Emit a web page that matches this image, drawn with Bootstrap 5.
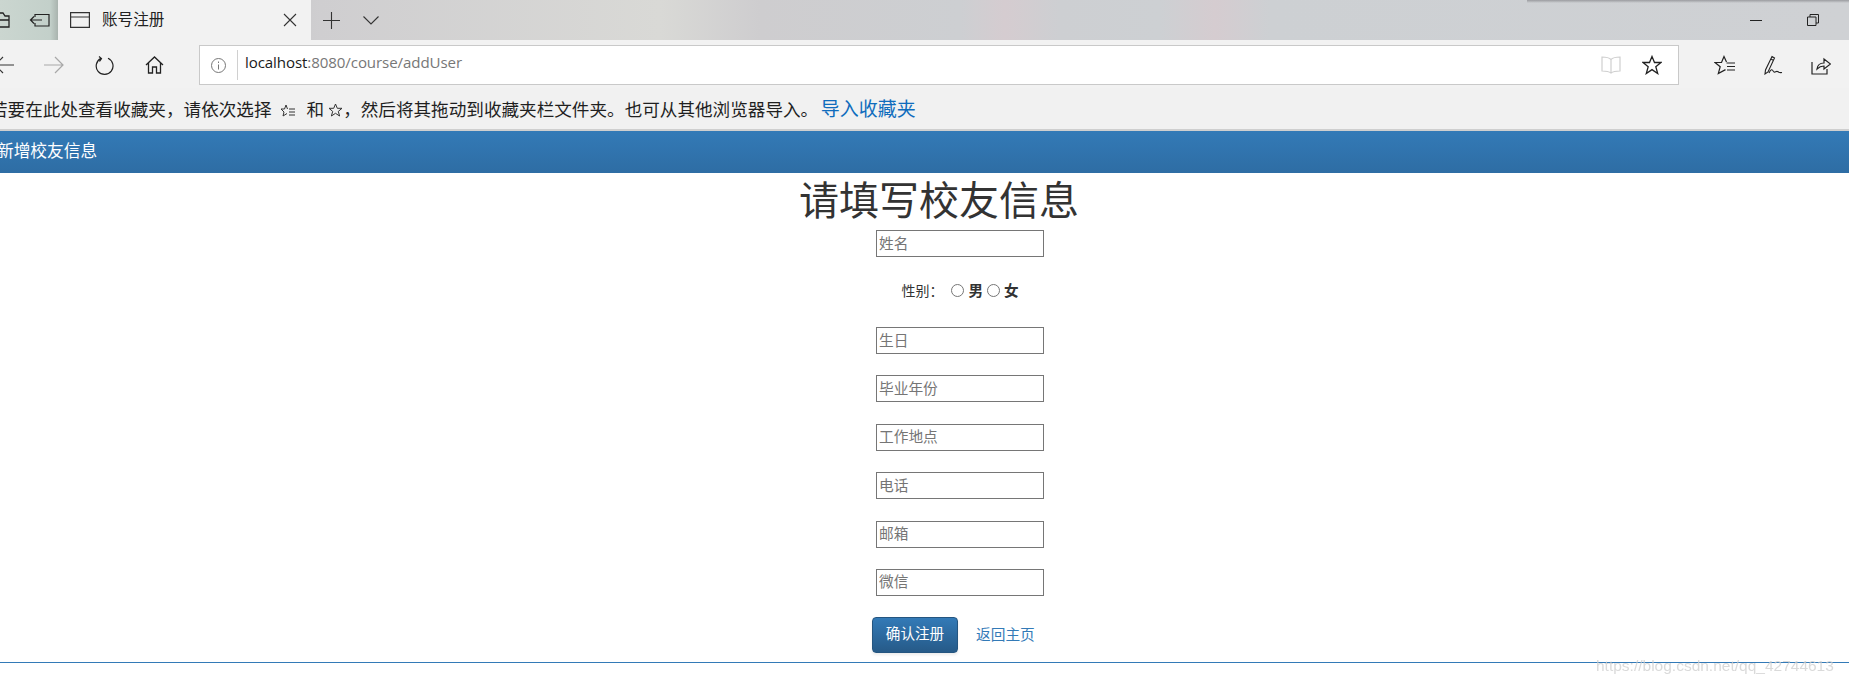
<!DOCTYPE html>
<html lang="zh-CN">
<head>
  <meta charset="UTF-8">
  <title>账号注册</title>
  <link href="https://cdn.jsdelivr.net/npm/bootstrap@5.3.2/dist/css/bootstrap.min.css" rel="stylesheet">
  <style>
    html, body { height: 684px; overflow: hidden; }
    body {
      background: #fff;
      color: #333;
      font-family: "Liberation Sans", "Noto Sans CJK SC", sans-serif;
      position: relative;
    }
    svg { display: block; flex: none; }

    /* browser frame */
    .tab-strip {
      height: 40px;
      position: relative;
      background: linear-gradient(90deg, #cbd6d0 0, #c3d0ca 50px, #a9b3ae 58px, #cfced0 320px, #d9d9d6 660px, #cecdcf 760px, #cdcfd2 960px, #d5ccd0 1005px, #cdcfd2 1060px, #cdd0d3 1160px, #d5ccd0 1215px, #cdd0d3 1270px, #cfd1d4 1849px);
    }
    .tab-shadow {
      position: absolute;
      left: 1527px;
      right: 0;
      top: 0;
      height: 3px;
      background: linear-gradient(#9b9ca0, rgba(155, 156, 160, 0));
    }
    .side-icons { width: 58px; padding-left: 0; }
    .tab-open {
      width: 253px;
      height: 40px;
      background: #f2f2f2;
      padding: 0 14px 0 12px;
      font-size: 15.6px;
      color: #222;
    }
    .strip-btn { width: 40px; }
    .win-btn { width: 57px; }
    .tool-row {
      height: 48px;
      background: #f2f2f2;
      padding-top: 2px;
    }
    .nav-icons { width: 199px; }
    .address-box {
      width: 1480px;
      height: 40px;
      background: #fff;
      border: 1px solid #c9c9c9;
    }
    .info-slot { width: 38px; height: 30px; border-right: 1px solid #d0d0d0; }
    .url-text {
      font-family: "Open Sans", "Noto Sans", sans-serif;
      font-size: 15.1px;
      letter-spacing: -0.1px;
      color: #777;
      padding-left: 7px;
      margin-top: -5px;
    }
    .url-host { color: #1a1a1a; }
    .addr-right { padding-right: 16px; gap: 21px; }
    .tool-right { flex: 1; justify-content: space-around; padding: 0 4px 0 21px; }
    .fav-row {
      height: 43px;
      background: #f1f1f1;
      border-bottom: 2px solid #cfcfcf;
      font-size: 17.6px;
      color: #1f1f1f;
      white-space: nowrap;
      padding-top: 3px;
    }
    .fav-line { margin-left: -10px; }
    .fav-link { color: #0f6cbd; font-size: 19px; text-decoration: none; margin-left: 2.5px; }

    /* page */
    .top-bar {
      height: 42px;
      background: linear-gradient(#337ab7, #2e6da4);
      padding: 0;
    }
    .top-bar .navbar-brand {
      color: #fff;
      font-size: 16.7px;
      padding: 0;
      margin-left: -3px;
    }
    .page-title {
      font-size: 40px;
      font-weight: 400;
      line-height: 48px;
      color: #333;
      margin: 4px 0 0 29px;
      white-space: nowrap;
    }
    .reg-form { padding-left: 71px; }
    .field-row { height: 48.4px; }
    .first-row { margin-top: 5px; height: 41px; }
    .sex-row { height: 56px; font-size: 14px; color: #333; padding-top: 10px; }
    .sex-row label { font-weight: 700; font-size: 14.6px; }
    .sex-row input { margin: 3px 4px 0 0; width: 13px; height: 13px; }
    .plain-input {
      width: 168px;
      height: 27px;
      border: 1px solid #767676;
      border-radius: 0;
      padding: 1px 2px;
      font-size: 14.7px;
      outline: 0;
      display: block;
    }
    .plain-input::placeholder { color: #757575; }
    .btn-row { width: 168px; margin-left: -8px; white-space: nowrap; }
    .btn-save {
      width: 86px;
      height: 36px;
      padding: 0;
      font-size: 14.6px;
      color: #fff;
      background: linear-gradient(#337ab7, #265a88);
      border: 1px solid #245580;
      border-radius: 4px;
      box-shadow: 0 2px 3px rgba(0, 0, 0, .08);
    }
    .back-link { color: #337ab7; font-size: 14.7px; text-decoration: none; margin-left: 18px; }
    .end-rule { margin: 9px 0 0; border: 0; border-top: 1px solid #337ab7; opacity: 1; }
    .watermark {
      position: absolute;
      left: 1596px;
      top: 654px;
      font-size: 15.5px;
      color: rgba(205, 205, 205, .75);
      filter: blur(.5px);
      white-space: nowrap;
    }
  </style>
</head>
<body>
  <div class="tab-strip d-flex align-items-center">
    <div class="tab-shadow"></div>
    <div class="side-icons d-flex align-items-center">
      <svg width="10" height="16" viewBox="0 0 10 16" fill="none" stroke="#222" stroke-width="1.3"><path d="M-4 1H3L5 4H9V15H-4M-4 8H9"/></svg>
      <svg class="ms-auto me-2" width="21" height="14" viewBox="0 0 21 14" fill="none" stroke="#222" stroke-width="1.2"><path d="M6 4V1.500H20V13H6V10M13 7H1.500M5 3.500L1.500 7L5 10.500"/></svg>
    </div>
    <div class="tab-open d-flex align-items-center">
      <svg width="20" height="16" viewBox="0 0 20 16" fill="none" stroke="#333" stroke-width="1.2"><path d="M.6.6H19.4V15.4H.6ZM.6 5H19.4"/></svg>
      <span class="ms-2 ps-1">账号注册</span>
      <svg class="ms-auto" width="14" height="14" viewBox="0 0 14 14" fill="none" stroke="#333" stroke-width="1.1"><path d="M1 1L13 13M13 1L1 13"/></svg>
    </div>
    <div class="strip-btn d-flex justify-content-center">
      <svg width="17" height="17" viewBox="0 0 17 17" fill="none" stroke="#333" stroke-width="1.1"><path d="M0 8.500H17M8.500 0V17"/></svg>
    </div>
    <div class="strip-btn d-flex justify-content-center">
      <svg width="16" height="9" viewBox="0 0 16 9" fill="none" stroke="#333" stroke-width="1.1"><path d="M.5.5L8 8L15.500.5"/></svg>
    </div>
    <div class="ms-auto d-flex align-items-center">
      <div class="win-btn d-flex justify-content-center"><svg width="12" height="1" viewBox="0 0 12 1"><path d="M0 .5H12" stroke="#222"/></svg></div>
      <div class="win-btn d-flex justify-content-center me-2"><svg width="12" height="12" viewBox="0 0 12 12" fill="none" stroke="#222"><path d="M.5 3H9V11.500H.5ZM3 3V.5H11.500V9H9"/></svg></div>
    </div>
  </div>

  <div class="tool-row d-flex align-items-center">
    <div class="nav-icons d-flex align-items-center">
      <svg style="margin-left:-6px;margin-right:30px" width="20" height="18" viewBox="0 0 20 18" fill="none" stroke="#333" stroke-width="1.2"><path d="M1 9H20M9 1L1 9L9 17"/></svg>
      <svg style="margin-right:31px" width="20" height="18" viewBox="0 0 20 18" fill="none" stroke="#a8a8a8" stroke-width="1.2"><path d="M0 9H19M11 1L19 9L11 17"/></svg>
      <svg style="margin-right:31px" width="19" height="19" viewBox="0 0 19 19" fill="none" stroke="#222" stroke-width="1.2"><path d="M6 2.400A8.400 8.400 0 1 0 13 2.300M4 .5L6.500 2.500L4.500 5.500"/></svg>
      <svg width="19" height="18" viewBox="0 0 19 18" fill="none" stroke="#222" stroke-width="1.3"><path d="M1 9L9.500 1L18 9M3.500 7V17H7.500V11H11.500V17H15.500V7"/></svg>
    </div>
    <div class="address-box d-flex align-items-center">
      <div class="info-slot d-flex align-items-center justify-content-center">
        <svg width="15" height="15" viewBox="0 0 15 15" fill="none" stroke="#777"><circle cx="7.500" cy="7.500" r="7"/><path d="M7.500 6.500V11.500M7.500 3.500V5"/></svg>
      </div>
      <div class="url-text"><span class="url-host">localhost</span>:8080/course/addUser</div>
      <div class="addr-right ms-auto d-flex align-items-center">
        <svg width="20" height="18" viewBox="0 0 20 18" fill="none" stroke="#cfcfcf" stroke-width="1.2"><path d="M10 3.500C8 1.500 4 1 1 1V15C4 15 8 15.500 10 17C12 15.500 16 15 19 15V1C16 1 12 1.500 10 3.500V17"/></svg>
        <svg width="20" height="20" viewBox="0 0 20 20" fill="none" stroke="#222" stroke-width="1.3"><path d="M10 1.500L12.500 7.500H19L13.800 11.700L15.700 18.500L10 14.600L4.300 18.500L6.200 11.700L1 7.500H7.500Z"/></svg>
      </div>
    </div>
    <div class="tool-right d-flex align-items-center">
      <svg width="21" height="20" viewBox="0 0 21 20" fill="none" stroke="#222" stroke-width="1.2"><path d="M21 8H12.500M21 11.500H13M21 15H13M11.500 14.600L4.300 18.500L6.200 11.700L1 7.500H7.500L10 1.500L12.500 7"/></svg>
      <svg width="20" height="20" viewBox="0 0 20 20" fill="none" stroke="#222" stroke-width="1.1"><path d="M9 1.500L11.500 3L5 17L2 19L2.500 15ZM8 4L10.500 5.500M6 18C8 14 9 14 10.500 16.500C12 18.500 13 15.500 14.500 16.500C16 17.500 17 18 19 17.500"/></svg>
      <svg width="20" height="19" viewBox="0 0 20 19" fill="none" stroke="#222" stroke-width="1.2"><path d="M1 6V18H16V13M6 13C6.500 9 9 7 13 7V3L19.500 8L13 13V10C10 10 8 11 6 13Z"/></svg>
    </div>
  </div>

  <div class="fav-row d-flex align-items-center">
    <div class="fav-line d-flex align-items-center">
      <span>若要在此处查看收藏夹，请依次选择</span>
      <svg class="mx-2" width="15" height="13" viewBox="0 0 15 13" fill="none" stroke="#333"><path d="M15 5H9M15 8H9M15 11H9M7 9.500L3 12L4 8L1 5H4.500L6 1L7.500 5"/></svg>
      <span class="ms-1">和</span>
      <svg class="ms-1" width="15" height="14" viewBox="0 0 15 14" fill="none" stroke="#333"><path d="M7.500 1L9.300 5.300H14L10.300 8.400L11.600 13L7.500 10.300L3.400 13L4.700 8.400L1 5.300H5.700Z"/></svg>
      <span>，然后将其拖动到收藏夹栏文件夹。也可从其他浏览器导入。</span>
      <a class="fav-link" href="#">导入收藏夹</a>
    </div>
  </div>

  <nav class="navbar top-bar">
    <a class="navbar-brand" href="#">新增校友信息</a>
  </nav>

  <main class="d-flex flex-column align-items-center">
    <h1 class="page-title">请填写校友信息</h1>
    <form class="reg-form d-flex flex-column align-items-center">
      <div class="first-row"><input class="plain-input" type="text" placeholder="姓名"></div>
      <div class="sex-row d-flex align-items-start">
        <span class="me-2">性别：</span>
        <input type="radio" name="sex" id="male"><label class="me-1" for="male">男</label>
        <input type="radio" name="sex" id="female"><label for="female">女</label>
      </div>
      <div class="field-row"><input class="plain-input" type="text" placeholder="生日"></div>
      <div class="field-row"><input class="plain-input" type="text" placeholder="毕业年份"></div>
      <div class="field-row"><input class="plain-input" type="text" placeholder="工作地点"></div>
      <div class="field-row"><input class="plain-input" type="text" placeholder="电话"></div>
      <div class="field-row"><input class="plain-input" type="text" placeholder="邮箱"></div>
      <div class="field-row"><input class="plain-input" type="text" placeholder="微信"></div>
      <div class="btn-row d-flex align-items-center">
        <button class="btn btn-save" type="button">确认注册</button>
        <a class="back-link" href="#">返回主页</a>
      </div>
    </form>
  </main>
  <hr class="end-rule">
  <div class="watermark">https://blog.csdn.net/qq_42744613</div>

  <script src="https://cdn.jsdelivr.net/npm/bootstrap@5.3.2/dist/js/bootstrap.bundle.min.js"></script>
</body>
</html>
